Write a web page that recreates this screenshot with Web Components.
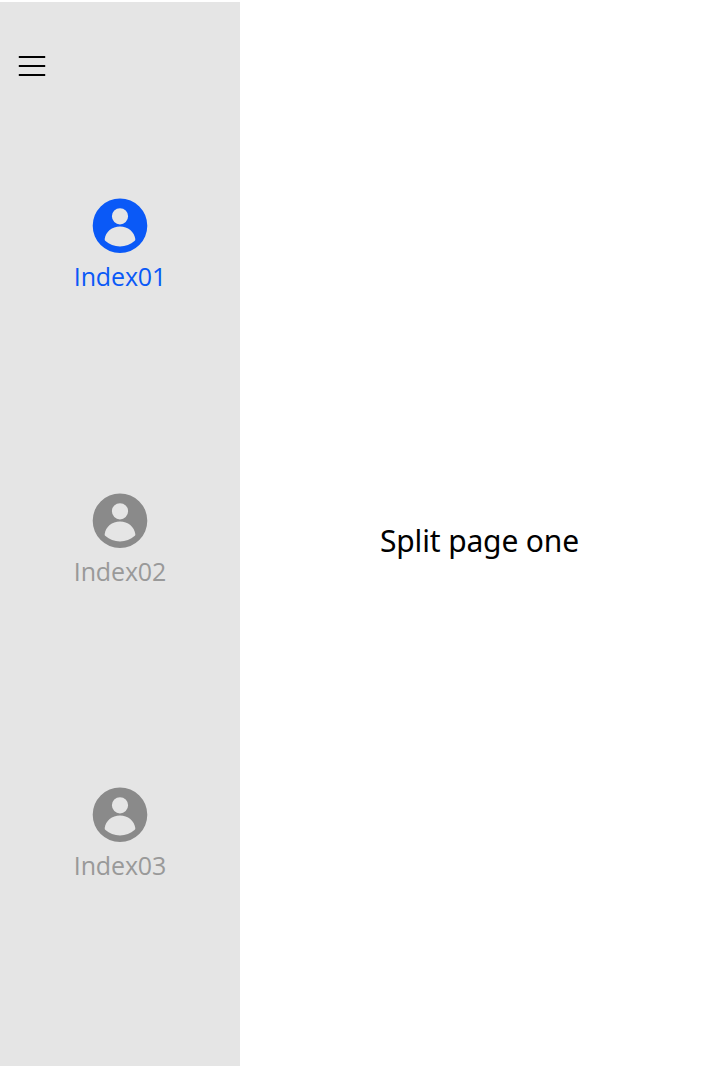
<!DOCTYPE html>
<html lang="en">
<head>
<meta charset="utf-8">
<title>Split page</title>
<style>
html, body { margin: 0; height: 100%; background: #fff; overflow: hidden; }
body { font-family: "Open Sans", "Noto Sans", sans-serif; }
</style>
</head>
<body>
<split-view>
  <side-bar slot="side">
    <side-tab active>Index01</side-tab>
    <side-tab>Index02</side-tab>
    <side-tab>Index03</side-tab>
  </side-bar>
  <page-content>Split page one</page-content>
</split-view>
<script>
const define = (name, html) => customElements.define(name, class extends HTMLElement {
  constructor() {
    super();
    this.attachShadow({ mode: 'open' }).innerHTML = html;
  }
});

define('split-view', `
<style>
:host { display: grid; grid-template-columns: 240px 1fr; height: 1066px; padding-top: 2px; box-sizing: border-box; }
</style>
<slot name="side"></slot><slot></slot>`);

define('menu-button', `
<style>
:host { display: block; height: 20px; padding: 54px 0 0 18px; }
svg { display: block; }
</style>
<svg width="28" height="20" viewBox="0 0 28 20"><path d="M.8 1h26.4M.8 10h26.4M.8 19h26.4" stroke="#000" stroke-width="2"/></svg>`);

define('side-bar', `
<style>
:host { display: flex; flex-direction: column; background: #e5e5e5; }
nav { display: grid; grid-template-rows: 295px 294px 295px; margin-top: 21px; }
</style>
<menu-button></menu-button>
<nav><slot></slot></nav>`);

define('side-tab', `
<style>
:host { display: flex; flex-direction: column; align-items: center; padding-top: 101px; color: #999; --icon: #8a8a8a; }
:host([active]) { color: #0a59f7; --icon: #0a59f7; }
svg { display: block; width: 56px; height: 56px; flex: none; }
span { font-size: 25px; line-height: 34px; margin-top: 5px; letter-spacing: -.15px; }
</style>
<svg viewBox="0 0 56 56"><path fill="var(--icon)" fill-rule="evenodd" d="M28 .4a27.3 27.3 0 1 1 0 54.6a27.3 27.3 0 0 1 0-54.6ZM28 10.2a8.1 8.1 0 1 0 0 16.2a8.1 8.1 0 0 0 0-16.2ZM28 28.4C20 28.4 13.6 33.8 12.7 41Q12.5 42.3 13.5 43.1C17.3 46.6 22.4 48.4 28 48.4S38.7 46.6 42.5 43.1Q43.5 42.3 43.3 41C42.4 33.8 36 28.4 28 28.4Z"/></svg>
<span><slot></slot></span>`);

define('page-content', `
<style>
:host { display: flex; align-items: center; justify-content: center; color: #000; font-family: "Noto Sans", sans-serif; }
span { font-size: 30px; line-height: 40px; margin-top: 13px; padding-left: 5px; letter-spacing: -.15px; }
</style>
<span><slot></slot></span>`);
</script>
</body>
</html>
